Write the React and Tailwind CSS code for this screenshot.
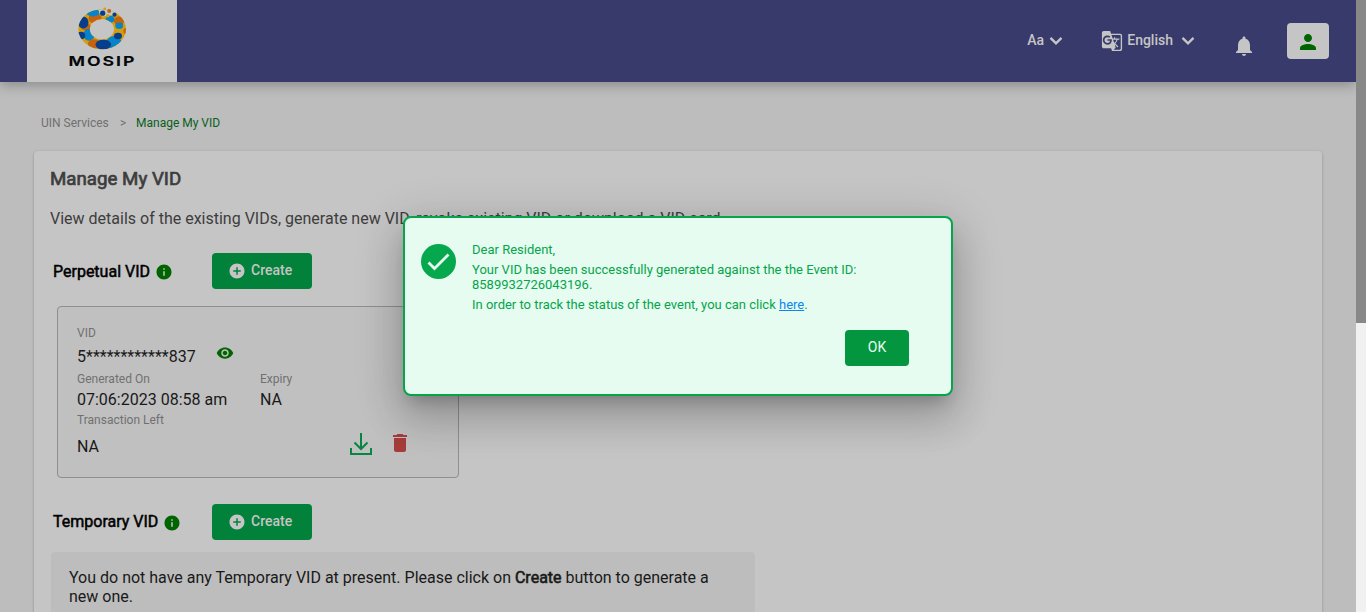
import React from "react";
import { MdInfo, MdAddCircle, MdPerson, MdNotifications, MdGTranslate, MdDelete, MdVisibility } from "react-icons/md";

function Logo() {
  return (
    <svg width="150" height="82" viewBox="27 0 150 82" className="block">
      <defs>
        <clipPath id="ring">
          <path clipRule="evenodd" d="M78.300 29.200a23.800 20 0 1 0 47.600 0a23.800 20 0 1 0-47.600 0ZM89.800 29.200a12.100 10.200 0 1 1 24.200 0a12.100 10.200 0 1 1-24.200 0Z" />
        </clipPath>
      </defs>
      <g clipPath="url(#ring)">
        <rect x="76" y="7" width="52" height="44" fill="#d49f0b" />
        <ellipse cx="95" cy="18.500" rx="6.500" ry="5" fill="#c4620f" />
        <ellipse cx="93" cy="12.800" rx="7" ry="3.600" fill="#0783c8" />
        <ellipse cx="86" cy="27" rx="5" ry="3.500" fill="#c4620f" />
        <ellipse cx="83.200" cy="22.500" rx="5.300" ry="6" fill="#063d8c" />
        <ellipse cx="89" cy="34.800" rx="5.700" ry="6" fill="#0783c8" />
        <ellipse cx="81" cy="35.500" rx="4.300" ry="3.800" fill="#063d8c" />
        <ellipse cx="94" cy="44" rx="6" ry="4.800" fill="#c4620f" />
        <ellipse cx="114" cy="42.500" rx="7.500" ry="6.500" fill="#0783c8" />
        <ellipse cx="103.300" cy="44.600" rx="7.800" ry="5.200" fill="#063d8c" />
        <ellipse cx="118" cy="36" rx="4" ry="3.300" fill="#063d8c" />
        <ellipse cx="119" cy="21" rx="5" ry="4.600" fill="#c4620f" />
        <ellipse cx="119.200" cy="25.700" rx="3.900" ry="3.200" fill="#0783c8" />
        <ellipse cx="126" cy="31" rx="2.600" ry="3" fill="#c4620f" />
        <ellipse cx="110" cy="19.300" rx="4.400" ry="3.500" fill="#0783c8" />
        <path d="M98.700 7H119L113 15L108 15.400L103 16.500L99 13Z" fill="#c5c5c5" />
      </g>
      <circle cx="102.700" cy="13.200" r="2.600" fill="#063d8c" />
      <circle cx="104.700" cy="8.900" r="1.300" fill="#d49f0b" />
      <circle cx="109.200" cy="11" r="2" fill="#c4620f" />
      <circle cx="107.800" cy="15.700" r="1.700" fill="#d49f0b" />
      <circle cx="114.500" cy="14.700" r="2.100" fill="#063d8c" />
      <text x="68.500" y="66.300" textLength="68" lengthAdjust="spacingAndGlyphs" fontSize="13.500" fontWeight="700" letterSpacing="1.500" fill="#080808" fontFamily="Inter, sans-serif">MOSIP</text>
    </svg>
  );
}

function Chevron({ className }) {
  return (
    <svg width="14" height="10" viewBox="0 0 14 10" fill="none" stroke="currentColor" strokeWidth="2.400" className={className}>
      <path d="M1.500 1.800L7 7.300L12.500 1.800" />
    </svg>
  );
}

function Header() {
  return (
    <header className="relative flex h-[82px] shrink-0 bg-[#373a6b] pl-[27px] text-[#c5c5c5] shadow-[0_3px_12px_rgba(0,0,0,0.28)]">
      <div className="w-[150px] bg-[#c5c5c5]"><Logo /></div>
      <div className="flex flex-1 items-center justify-end pr-[27px]">
        <div className="mb-[2px] flex items-center text-[14px] font-medium">
          <span className="w-[22px]">Aa</span>
          <Chevron className="mt-[2px]" />
        </div>
        <div className="ml-[38px] flex items-center text-[14px] font-medium">
          <MdGTranslate className="size-[22px]" />
          <span className="mb-[2px] ml-[4px]">English</span>
          <Chevron className="ml-[8px]" />
        </div>
        <MdNotifications className="mt-[10px] ml-[37px] size-[24px]" />
        <div className="ml-[31px] flex h-[36px] w-[42px] items-center justify-center rounded-[4px] bg-[#c5c5c5]">
          <MdPerson className="mt-[2px] size-[24px] text-[#006400]" />
        </div>
      </div>
    </header>
  );
}

function CreateButton() {
  return (
    <button className="flex h-[36px] w-[100px] items-center rounded-[4px] bg-[#02813a] pl-[16px] text-[14px] font-medium text-[#c5c5c5]">
      <MdAddCircle className="size-[18px]" />
      <span className="mb-[2px] ml-[5px]">Create</span>
    </button>
  );
}

function SectionTitle({ children, className }) {
  return (
    <div className="flex h-[36px] items-center pl-[19px]">
      <div className="flex w-[159px] items-center text-[16px] text-black">
        <span className={`[-webkit-text-stroke:0.5px_currentColor] ${className}`}>{children}</span>
        <MdInfo className="mt-[1px] ml-[5px] size-[18px] text-[#006400]" />
      </div>
      <CreateButton />
    </div>
  );
}

function VidCard() {
  return (
    <div className="ml-[23px] h-[172px] w-[402px] rounded-[4px] border border-[#8f8f8f] bg-[#c0c0c0] pt-[18px] pl-[19px] text-[16px] leading-[20px] text-[#191919]">
      <div className="text-[12px] leading-[16px] text-[#707070]">VID</div>
      <div className="mt-[6px] flex">
        <span className="w-[139px]">5************837</span>
        <MdVisibility className="-mt-[3px] size-[18px] text-[#006400]" />
      </div>
      <div className="mt-[4px] flex">
        <div className="w-[183px]">
          <div className="text-[12px] leading-[16px] text-[#707070]">Generated On</div>
          <div className="mt-[3px]">07:06:2023 08:58 am</div>
        </div>
        <div>
          <div className="text-[12px] leading-[16px] text-[#707070]">Expiry</div>
          <div className="mt-[3px]">NA</div>
        </div>
      </div>
      <div className="mt-[2px] text-[12px] leading-[16px] text-[#707070]">Transaction Left</div>
      <div className="mt-[2px] flex h-[32px] items-center">
        <span className="mt-[2px] w-[272px]">NA</span>
        <svg width="24" height="24" viewBox="0 0 24 24" fill="none" stroke="#078542" strokeWidth="2" className="-mt-[4px]">
          <path d="M12 1v16M5.500 10.500l6.500 6.500 6.500-6.500M2 16v6h20v-6" />
        </svg>
        <MdDelete className="-mt-[6px] ml-[15px] size-[24px] text-[#a63c3c]" />
      </div>
    </div>
  );
}

function Dialog() {
  return (
    <div role="dialog" className="absolute top-[216px] left-[403px] flex h-[180px] w-[550px] rounded-[8px] border-2 border-[#06a44b] bg-[#e6fcf1] pt-[26px] pl-[16px] text-[13px] leading-[15px] text-[#06a44b] shadow-[0_11px_15px_-7px_rgba(0,0,0,0.2),0_24px_38px_3px_rgba(0,0,0,0.14),0_9px_46px_8px_rgba(0,0,0,0.12)]">
      <svg width="35" height="35" viewBox="0 0 35 35" className="shrink-0">
        <circle cx="17.500" cy="17.500" r="17.500" fill="#06a84e" />
        <path d="M7.500 18.500L13.500 24.500L27.500 10.500" fill="none" stroke="#e6fcf1" strokeWidth="2.800" />
      </svg>
      <div className="ml-[16px] w-[437px]">
        <p className="-mt-[2px]">Dear Resident,</p>
        <p className="mt-[5px]">Your VID has been successfully generated against the the Event ID:<br />8589932726043196.</p>
        <p className="mt-[5px]">In order to track the status of the event, you can click <a className="text-[#0a87f0] underline">here</a>.</p>
        <div className="mt-[18px] flex justify-end">
          <button className="h-[36px] w-[64px] rounded-[4px] bg-[#03963f] pb-[2px] text-[14px] text-[#e6fcf1]">OK</button>
        </div>
      </div>
    </div>
  );
}

export default function App() {
  return (
    <div className="relative flex h-[612px] w-[1366px] overflow-hidden bg-[#bdbdbd] font-[Roboto,sans-serif]">
      <div className="flex w-[1356px] flex-col overflow-hidden">
        <Header />
        <nav className="mt-[33px] flex h-[16px] items-center pl-[41px] text-[12px] leading-[16px] text-[#707070]">
          <span className="w-[79px]">UIN Services</span>
          <span className="w-[16px]">&gt;</span>
          <span className="text-[#0b5f1c]">Manage My VID</span>
        </nav>
        <main className="mt-[20px] ml-[34px] h-[600px] w-[1288px] shrink-0 rounded-[4px] bg-[#c5c5c5] pt-[15px] shadow-[0_1px_3px_rgba(0,0,0,0.25)]">
          <h1 className="pl-[16px] text-[18.72px] leading-[26px] font-normal text-[#3d3d3d] [-webkit-text-stroke:0.7px_currentColor]">Manage My VID</h1>
          <p className="mt-[17px] pl-[16px] text-[16px] leading-[20px] text-[#3d3d3d]">View details of the existing VIDs, generate new VID, revoke existing VID or download a VID card.</p>
          <div className="mt-[24px]"><SectionTitle className="mt-[2px]">Perpetual VID</SectionTitle></div>
          <div className="mt-[17px]"><VidCard /></div>
          <div className="mt-[26px]"><SectionTitle className="mt-0">Temporary VID</SectionTitle></div>
          <div className="mt-[12px] ml-[17px] h-[90px] w-[704px] rounded-[4px] bg-[#bdbdbd] pt-[16px] pl-[18px] text-[16px] leading-[19px] text-[#191919]">
            You do not have any Temporary VID at present. Please click on <span className="[-webkit-text-stroke:0.6px_currentColor]">Create</span> button to generate a<br />new one.
          </div>
        </main>
      </div>
      <div className="w-[10px] bg-[#f1f1f1]"><div className="h-[323px] bg-[#888888]" /></div>
      <Dialog />
    </div>
  );
}
